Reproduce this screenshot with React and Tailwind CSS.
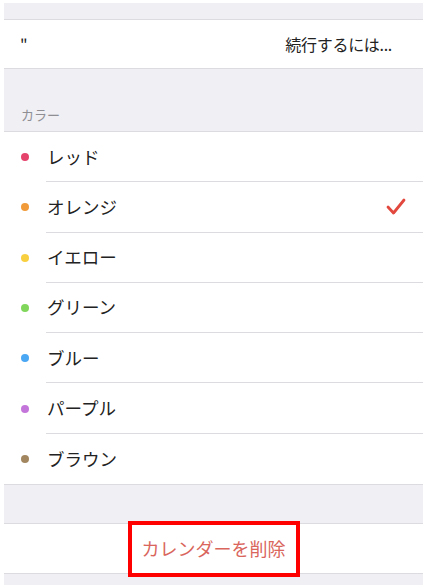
import React from "react";

const colors = [
  { name: "レッド", c: "bg-[#e6436c]" },
  { name: "オレンジ", c: "bg-[#f09a3a]", checked: true },
  { name: "イエロー", c: "bg-[#f8cf3f]" },
  { name: "グリーン", c: "bg-[#7fd65a]" },
  { name: "ブルー", c: "bg-[#4aa7f3]" },
  { name: "パープル", c: "bg-[#c475da]" },
  { name: "ブラウン", c: "bg-[#a2865f]" },
];

export default function App() {
  return (
    <div
      className="w-[425px] h-[588px] bg-white pt-[3px] pl-[4px] pr-[2px] pb-[3px] overflow-hidden"
      style={{ fontFamily: '"Noto Sans CJK JP", "Noto Sans", sans-serif' }}
    >
      <div className="h-full bg-[#efeff4] flex flex-col">
        <div className="h-[16px]" />
        <div className="bg-white border-y border-[#dcdce0] h-[50px] flex items-center justify-between pl-[16px] pr-[31px] text-[16px] text-[#222]">
          <span>"</span>
          <span className="tracking-[-0.3px]">続行するには...</span>
        </div>
        <div className="h-[62px] flex items-end pl-[17px] pb-[7px] text-[13px] text-[#8e8e93]">
          カラー
        </div>
        <div className="bg-white border-y border-[#dcdce0]">
          {colors.map((item, i) => (
            <div key={item.name} className="flex items-center h-[50.3px]">
              <div className="w-[42px] flex justify-center">
                <div className={`w-[8px] h-[8px] rounded-full ${item.c}`} />
              </div>
              <div
                className={`flex-1 h-full flex items-center justify-between pr-[17px] ${
                  i < colors.length - 1 ? "border-b border-[#dcdce0]" : ""
                }`}
              >
                <span className="text-[17.5px] text-[#222] pl-[1px]">{item.name}</span>
                {item.checked && (
                  <svg width="20" height="17" viewBox="0 0 20 17">
                    <path d="M2 9 L7.5 15 L18 2" fill="none" stroke="#e2483d" strokeWidth="2.8" strokeLinecap="round" strokeLinejoin="round" />
                  </svg>
                )}
              </div>
            </div>
          ))}
        </div>
        <div className="h-[38px]" />
        <div className="bg-white border-y border-[#dcdce0] h-[51px] flex items-center justify-center">
          <div className="border-[4px] border-[#ff0000] w-[172px] h-[56px] flex items-center justify-center">
            <span className="text-[18px] text-[#d9655c]">カレンダーを削除</span>
          </div>
        </div>
      </div>
    </div>
  );
}
